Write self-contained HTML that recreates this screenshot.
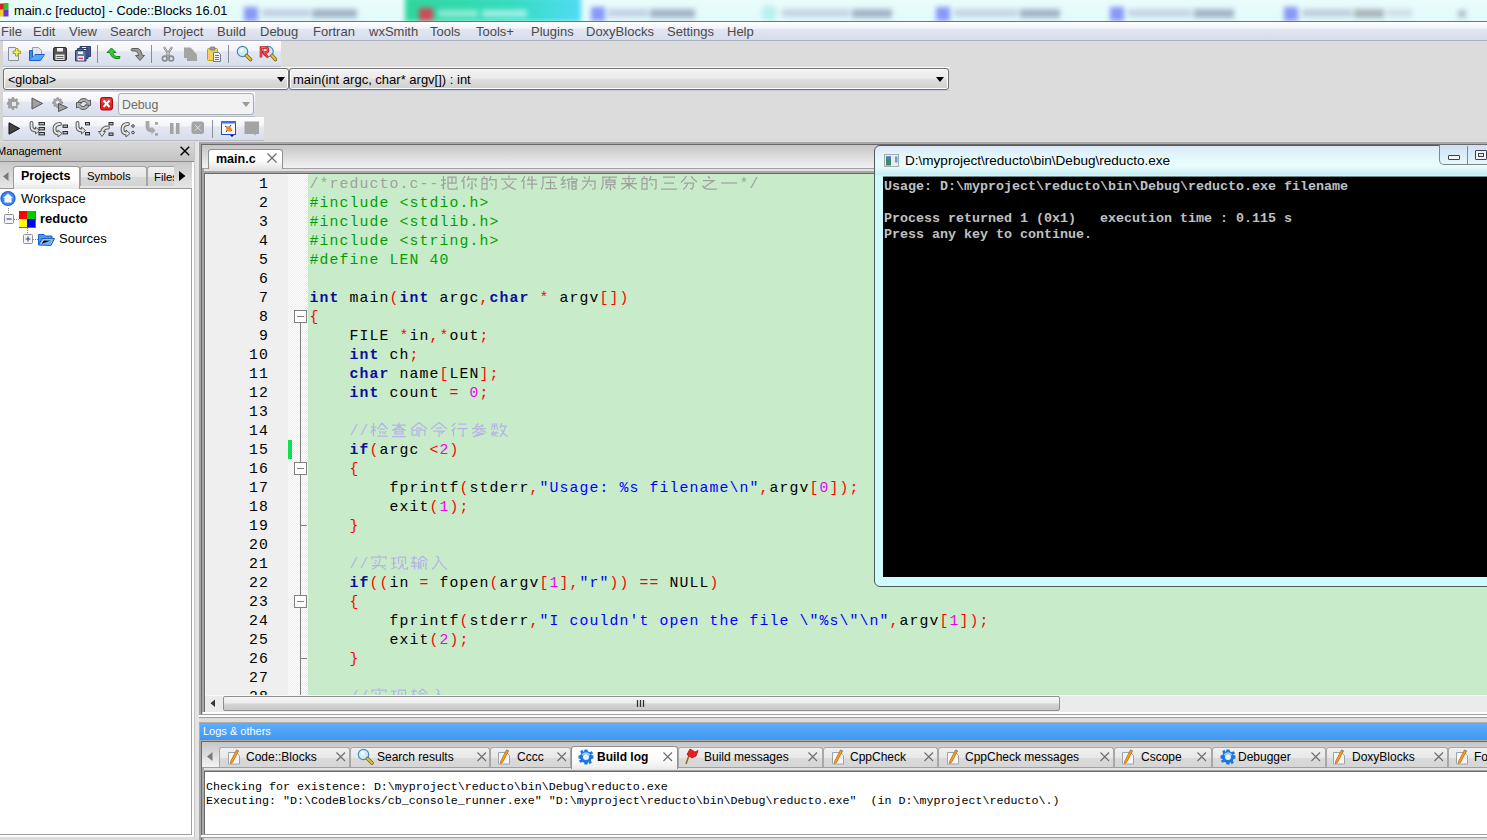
<!DOCTYPE html>
<html><head><meta charset="utf-8">
<style>
*{margin:0;padding:0;box-sizing:border-box}
html,body{width:1487px;height:840px;overflow:hidden;background:#dcdcdc;font-family:"Liberation Sans",sans-serif;font-size:13px;color:#000}
.a{position:absolute}
.t{position:absolute;white-space:nowrap;line-height:1}
#title{left:0;top:0;width:1487px;height:22px;background:linear-gradient(#eafcfc,#e3fafa);border-bottom:1px solid #6b7676;overflow:hidden}
#menu{left:0;top:22px;width:1487px;height:19px;background:linear-gradient(#fefefe 0,#f3f4f9 6px,#e2e6f2 7.5px,#d8ddec 18px);border-bottom:1px solid #aab0c0}
.m{position:absolute;top:24px;font-size:13px;color:#4a4a4a}
.tb{position:absolute;background:linear-gradient(#fdfdfe 0%,#f3f4f9 38%,#e3e7f2 44%,#d9deec 100%);border-bottom:1px solid #b9bcc6}
.strip{position:absolute;left:0;width:3px;background:#d5d5d5}
.sep{position:absolute;width:1px;background:#8a8e99}
.combo{position:absolute;border:1px solid #707070;border-radius:3px;box-shadow:inset 0 0 0 1px #fdfdfd;background:linear-gradient(#f2f2f2 0%,#ebebeb 45%,#dddddd 55%,#cfcfcf 100%)}
.code{font-family:"Liberation Mono",monospace;font-size:16.67px}

.ln{position:absolute;left:205px;width:64px;height:19px;text-align:right;font-family:"Liberation Mono",monospace;font-size:14.8px;letter-spacing:1.12px;line-height:19px;padding-top:1px;color:#000;white-space:pre}
.cl{position:absolute;left:309.5px;height:19px;font-family:"Liberation Mono",monospace;font-size:14.8px;letter-spacing:1.12px;line-height:19px;padding-top:1px;color:#000;white-space:pre}
.cl .k{color:#0c0ca0;font-weight:bold}
.cl .o{color:#ff0000}
.cl .n{color:#f000f0}
.cl .s{color:#0000ff}
.cl .p{color:#00a000}
.cl .c{color:#a0a0a0}
.cl .l{color:#b4b4e6}
.g{vertical-align:top;margin-top:-1.5px;margin-left:-1px;margin-right:1px;fill:none;stroke:currentColor;stroke-width:1.25}
.con{position:absolute;white-space:pre;font-family:"Liberation Mono",monospace;font-size:13.33px;font-weight:bold;line-height:16px;color:#c0c0c0}
.logt{position:absolute;white-space:pre;font-family:"Liberation Mono",monospace;font-size:11.67px;line-height:14px;color:#000}
.fb{position:absolute;left:294px;width:13px;height:13px;border:1px solid #808080;background:#fff}.fb:after{content:"";position:absolute;left:2px;top:5px;width:7px;height:1px;background:#808080}
</style></head><body>

<!-- title bar -->
<div id="title" class="a"></div>
<div class="a" style="left:0;top:0;width:1487px;height:21px;overflow:hidden">
 <div class="a" style="left:-20px;top:-10px;width:1530px;height:40px;filter:blur(2.5px)">
  <div class="a" style="left:264px;top:17px;width:14px;height:14px;background:#7f8cf6;opacity:.9"></div>
  <div class="a" style="left:282px;top:19px;width:48px;height:8px;background:#b4bed8;opacity:.7"></div>
  <div class="a" style="left:332px;top:19px;width:45px;height:9px;background:#98a8c0;opacity:.85"></div>
  <div class="a" style="left:425px;top:6px;width:176px;height:26px;background:linear-gradient(90deg,#2fd69a,#35dcc0 60%,#50dcf4)"></div>
  <div class="a" style="left:439px;top:18px;width:14px;height:13px;background:#d04a56"></div>
  <div class="a" style="left:458px;top:20px;width:40px;height:7px;background:#a8f0e0;opacity:.8"></div>
  <div class="a" style="left:502px;top:20px;width:45px;height:7px;background:#c0f4f0;opacity:.8"></div>
  <div class="a" style="left:611px;top:17px;width:14px;height:14px;background:#7f8cf6;opacity:.9"></div>
  <div class="a" style="left:628px;top:19px;width:40px;height:8px;background:#b4bed8;opacity:.7"></div>
  <div class="a" style="left:670px;top:19px;width:45px;height:9px;background:#98a8c0;opacity:.85"></div>
  <div class="a" style="left:781px;top:15px;width:16px;height:16px;border-radius:8px;background:#b0ecec;opacity:.8"></div>
  <div class="a" style="left:802px;top:19px;width:68px;height:8px;background:#b8c4dc;opacity:.7"></div>
  <div class="a" style="left:872px;top:19px;width:40px;height:9px;background:#98a8c0;opacity:.85"></div>
  <div class="a" style="left:956px;top:17px;width:14px;height:14px;background:#7f8cf6;opacity:.9"></div>
  <div class="a" style="left:974px;top:19px;width:64px;height:8px;background:#b8c4dc;opacity:.7"></div>
  <div class="a" style="left:1040px;top:19px;width:40px;height:9px;background:#98a8c0;opacity:.85"></div>
  <div class="a" style="left:1130px;top:17px;width:14px;height:14px;background:#7f8cf6;opacity:.9"></div>
  <div class="a" style="left:1148px;top:19px;width:64px;height:8px;background:#b8c4dc;opacity:.7"></div>
  <div class="a" style="left:1214px;top:19px;width:40px;height:9px;background:#98a8c0;opacity:.85"></div>
  <div class="a" style="left:1304px;top:17px;width:14px;height:14px;background:#7f8cf6;opacity:.9"></div>
  <div class="a" style="left:1322px;top:19px;width:50px;height:8px;background:#b0bcd0;opacity:.7"></div>
  <div class="a" style="left:1374px;top:19px;width:30px;height:9px;background:#90989f;opacity:.7"></div>
  <div class="a" style="left:1407px;top:19px;width:25px;height:8px;background:#c8d4e0;opacity:.7"></div>
  <div class="a" style="left:1478px;top:20px;width:8px;height:8px;background:#a0a8b8;opacity:.7"></div>
 </div>
</div>
<svg class="a" style="left:0;top:3px" width="9" height="15"><rect x="-1" y="0.5" width="5" height="6" fill="#e02020"/><rect x="3.5" y="0" width="5" height="6.5" fill="#30c030"/><rect x="-1" y="7" width="5" height="6.5" fill="#e8d020"/><rect x="3.5" y="6.5" width="5" height="7" fill="#7030d0"/></svg>
<div class="t" style="left:14px;top:5px;font-size:12.8px;color:#000">main.c [reducto] - Code::Blocks 16.01</div>

<div id="menu" class="a"></div>
<div class="m" style="left:1px">File</div>
<div class="m" style="left:33px">Edit</div>
<div class="m" style="left:69px">View</div>
<div class="m" style="left:110px">Search</div>
<div class="m" style="left:163px">Project</div>
<div class="m" style="left:217px">Build</div>
<div class="m" style="left:260px">Debug</div>
<div class="m" style="left:313px">Fortran</div>
<div class="m" style="left:369px">wxSmith</div>
<div class="m" style="left:430px">Tools</div>
<div class="m" style="left:476px">Tools+</div>
<div class="m" style="left:531px">Plugins</div>
<div class="m" style="left:586px">DoxyBlocks</div>
<div class="m" style="left:667px">Settings</div>
<div class="m" style="left:727px">Help</div>

<!-- toolbar 1 -->
<div class="tb" style="left:0;top:41px;width:281px;height:26px"></div>
<div class="strip" style="top:41px;height:26px"></div>

<!-- combo row -->
<div class="a" style="left:3px;top:67px;width:947px;height:1px;background:#fbfbfb"></div>
<div class="a" style="left:3px;top:90px;width:947px;height:1px;background:#c4c8d8"></div>
<div class="combo" style="left:3px;top:68px;width:286px;height:22px"></div>
<div class="combo" style="left:289px;top:68px;width:660px;height:22px"></div>

<!-- toolbar 2 -->
<div class="tb" style="left:0;top:92px;width:255px;height:25px"></div>
<div class="strip" style="top:92px;height:25px"></div>
<!-- toolbar 3 -->
<div class="tb" style="left:0;top:117px;width:264px;height:24px"></div>
<div class="strip" style="top:117px;height:24px"></div>
<!--ICONS-->
<svg class="a" style="left:7px;top:46px" width="16" height="16" viewBox="0 0 16 16"><path d="M1.5 1.5H8.5L11.5 4.5V14.5H1.5Z" fill="#e4ebf2" stroke="#8a9099"/><path d="M8.5 2.5H11V5H13.5V7.5H11V10H8.5V7.5H6V5H8.5Z" fill="#f0ee60" stroke="#a8a020" stroke-width="1"/></svg>
<svg class="a" style="left:28px;top:46px" width="18" height="16" viewBox="0 0 18 16"><path d="M4.5 1.5H10.5L13.5 4.5V11H4.5Z" fill="#e2e6ea" stroke="#9aa0a8"/><path d="M1.5 4.5H4.5V13.5L7 8.5H16.5L12.5 14.5H1.5Z" fill="#3b8ee6" stroke="#1d5fc4"/><path d="M2 14L6.5 9H16L12 14Z" fill="#55a8f2"/></svg>
<svg class="a" style="left:52px;top:46px" width="16" height="16" viewBox="0 0 16 16"><rect x="1.5" y="1.5" width="13" height="13" rx="1.5" fill="#555" stroke="#2e2e2e"/><rect x="5" y="2" width="6" height="3.5" fill="#f2f2f2"/><rect x="3.5" y="8.5" width="9" height="5.5" fill="#e6e6e6"/><path d="M4.5 10.5H11.5M4.5 12.5H11.5" stroke="#666" stroke-width="1"/></svg>
<svg class="a" style="left:74px;top:45px" width="18" height="17" viewBox="0 0 18 17"><path d="M6 1.5H16.5V11.5H6Z" fill="#4b6190" stroke="#2d3e66"/><path d="M3.5 3.5H14V13.5H3.5Z" fill="#50679a" stroke="#2d3e66"/><path d="M1.5 5.5H12V16H1.5Z" fill="#6179ab" stroke="#2d3e66"/><rect x="4" y="6.5" width="5" height="2.5" fill="#f4f4f4"/><rect x="3.5" y="11" width="6.5" height="4.5" fill="#e8e8ee"/><path d="M4.5 13.3H9" stroke="#e03030" stroke-width="1.2"/><path d="M8 2.5H12M10 4.5H12" stroke="#e8ecf4" stroke-width="1"/></svg>
<div class="sep" style="left:97px;top:45px;height:18px"></div>
<svg class="a" style="left:106px;top:47px" width="16" height="14" viewBox="0 0 16 14"><path d="M5.5 1L1 5.5H3.5L4.5 7.5Q6.5 11.5 10 11.5H13.5L14 9.5H10.5Q8 9.5 7 6.5L7.5 5.5H10Z" fill="#3cc43c" stroke="#118a11" stroke-width="1" stroke-linejoin="round"/></svg>
<svg class="a" style="left:130px;top:47px" width="16" height="15" viewBox="0 0 16 15"><path d="M1 2.5Q1 1.5 3 1.5H7Q10.5 1.5 11.5 6L12.5 8.5H14.5L10 13.5L5.5 8.5H8.5L8 6.5Q7 4 5 4H2Z" fill="#9a9a9a" stroke="#5e5e5e" stroke-width="1" stroke-linejoin="round"/></svg>
<div class="sep" style="left:151px;top:45px;height:18px"></div>
<svg class="a" style="left:161px;top:46px" width="14" height="16" viewBox="0 0 14 16"><path d="M3 1L8.5 10M11 1L5.5 10" stroke="#7c7c7c" stroke-width="2.2"/><path d="M3 1L8.5 10M11 1L5.5 10" stroke="#dcdcdc" stroke-width="0.8"/><circle cx="3.8" cy="12.5" r="2.4" fill="none" stroke="#8a8a8a" stroke-width="1.6"/><circle cx="10.2" cy="12.5" r="2.4" fill="none" stroke="#8a8a8a" stroke-width="1.6"/></svg>
<svg class="a" style="left:183px;top:46px" width="16" height="16" viewBox="0 0 16 16"><path d="M1 1.5H7.5L10.5 4.5V12H1Z" fill="#a4a4a4"/><path d="M4 5H10.5L14 8.5V15H4Z" fill="#a4a4a4"/></svg>
<svg class="a" style="left:206px;top:46px" width="16" height="16" viewBox="0 0 16 16"><rect x="1.5" y="2.5" width="10" height="12" rx="1" fill="#f6cf5c" stroke="#c69a20"/><rect x="4" y="1" width="5" height="3" rx="1" fill="#9aa2aa" stroke="#6a727a" stroke-width="0.8"/><path d="M7.5 6.5H12.5L14.5 8.5V15.5H7.5Z" fill="#f2f4f8" stroke="#6a7a8a"/><path d="M9 9.5H13M9 11.5H13M9 13.5H13" stroke="#3a78d8" stroke-width="1"/></svg>
<div class="sep" style="left:228px;top:45px;height:18px"></div>
<svg class="a" style="left:236px;top:45px" width="17" height="17" viewBox="0 0 17 17"><circle cx="6.5" cy="6.5" r="5.2" fill="#cfeaf6" stroke="#4a8cae" stroke-width="1.2"/><circle cx="5.5" cy="5" r="2" fill="#f2fbff"/><path d="M10.5 10.5L14.5 14.5" stroke="#7a6210" stroke-width="3.6" stroke-linecap="round"/><path d="M10.5 10.5L14.5 14.5" stroke="#e0c040" stroke-width="2" stroke-linecap="round"/></svg>
<svg class="a" style="left:259px;top:45px" width="18" height="17" viewBox="0 0 18 17"><circle cx="9" cy="6.5" r="5.2" fill="#cfeaf6" stroke="#4a8cae" stroke-width="1.2"/><path d="M13 10.5L16.5 14.5" stroke="#7a6210" stroke-width="3.6" stroke-linecap="round"/><path d="M13 10.5L16.5 14.5" stroke="#e0c040" stroke-width="2" stroke-linecap="round"/><path d="M2 12.5V2.5H6.5Q9 2.5 9 5Q9 7.5 6.5 7.5H4.5L9 12.5" fill="none" stroke="#c81818" stroke-width="2.6"/><path d="M2 12.5V2.5H6.5Q9 2.5 9 5Q9 7.5 6.5 7.5H4.5L9 12.5" fill="none" stroke="#ff6a6a" stroke-width="0.9"/></svg>
<svg class="a" style="left:7px;top:97px" width="14" height="14" viewBox="0 0 14 14"><g transform="translate(0.5 -0.3) scale(0.68)" fill="#9e9e9e"><path d="M6.5 0.5H9.5L10 2.5L12 3.5L13.8 2.3L15.7 4.2L14.5 6L15.5 8L17.5 8.5V11.5L15.5 12L14.5 14L15.7 15.8L13.8 17.7L12 16.5L10 17.5L9.5 19.5H6.5L6 17.5L4 16.5L2.2 17.7L0.3 15.8L1.5 14L0.5 12L-1.5 11.5V8.5L0.5 8L1.5 6L0.3 4.2L2.2 2.3L4 3.5L6 2.5Z"/></g><rect x="5" y="5" width="4" height="4" fill="#e4e7ef"/></svg>
<svg class="a" style="left:31px;top:97px" width="12" height="13" viewBox="0 0 12 13"><path d="M1 1V12L11.5 6.5Z" fill="#a0a0a0" stroke="#555" stroke-width="1"/></svg>
<svg class="a" style="left:52px;top:97px" width="16" height="15" viewBox="0 0 16 15"><g transform="translate(1.5 0.5) scale(0.52)" fill="#a8a8a8" stroke="#707070" stroke-width="1"><path d="M6.5 0.5H9.5L10 2.5L12 3.5L13.8 2.3L15.7 4.2L14.5 6L15.5 8L17.5 8.5V11.5L15.5 12L14.5 14L15.7 15.8L13.8 17.7L12 16.5L10 17.5L9.5 19.5H6.5L6 17.5L4 16.5L2.2 17.7L0.3 15.8L1.5 14L0.5 12L-1.5 11.5V8.5L0.5 8L1.5 6L0.3 4.2L2.2 2.3L4 3.5L6 2.5Z"/></g><circle cx="5.6" cy="5.3" r="1.6" fill="#f0f0f0"/><path d="M6.5 6.5V14.5L15.5 10.5Z" fill="#a0a0a0" stroke="#555" stroke-width="1"/></svg>
<svg class="a" style="left:75px;top:97px" width="17" height="14" viewBox="0 0 17 14"><path d="M3 6Q4 1.5 9 1.5Q12 1.5 13.5 4L15.5 3V8.5H10L12 6.5Q11 4.5 9 4.5Q6.5 4.5 6 6Z" fill="#b0b0b0" stroke="#5a5a5a" stroke-width="1" stroke-linejoin="round"/><path d="M14 8Q13 12.5 8 12.5Q5 12.5 3.5 10L1.5 11V5.5H7L5 7.5Q6 9.5 8 9.5Q10.5 9.5 11 8Z" fill="#b0b0b0" stroke="#5a5a5a" stroke-width="1" stroke-linejoin="round"/></svg>
<svg class="a" style="left:100px;top:97px" width="13" height="14" viewBox="0 0 13 14"><rect x="0.5" y="0.5" width="12" height="12.5" rx="2" fill="#e02020" stroke="#a01010"/><rect x="1.5" y="1.5" width="10" height="5" rx="1" fill="#f05050" opacity="0.6"/><path d="M3.5 3.5L9.5 10M9.5 3.5L3.5 10" stroke="#fff" stroke-width="2"/></svg>
<svg class="a" style="left:8px;top:122px" width="12" height="13" viewBox="0 0 12 13"><path d="M1 0.8V12.2L11.5 6.5Z" fill="#444" stroke="#111" stroke-width="1"/></svg>
<svg class="a" style="left:29px;top:121px" width="17" height="16" viewBox="0 0 17 16"><path d="M2.5 2V5.5Q2.5 9.5 7 9.5" fill="none" stroke="#5a5a5a" stroke-width="3.8" stroke-linecap="round" stroke-linejoin="round"/><path d="M6.5 6L10.5 9.5L6.5 13Z" fill="#e6e6e6" stroke="#5a5a5a" stroke-width="1" stroke-linejoin="round"/><path d="M2.5 2V5.5Q2.5 9.5 7 9.5" fill="none" stroke="#e6e6e6" stroke-width="1.8" stroke-linecap="round" stroke-linejoin="round"/><rect x="10" y="1.5" width="5.5" height="2.4" fill="#b8b8b8" stroke="#2e2e2e" stroke-width="1"/><rect x="10" y="6.5" width="5.5" height="2.4" fill="#b8b8b8" stroke="#2e2e2e" stroke-width="1"/><rect x="10" y="11.5" width="5.5" height="2.4" fill="#b8b8b8" stroke="#2e2e2e" stroke-width="1"/></svg>
<svg class="a" style="left:52px;top:121px" width="17" height="17" viewBox="0 0 17 17"><path d="M8 3Q2.5 3 2.5 8Q2.5 12.5 6.5 12.5" fill="none" stroke="#5a5a5a" stroke-width="3.8" stroke-linecap="round" stroke-linejoin="round"/><path d="M6 9L10 12.5L6 16Z" fill="#e6e6e6" stroke="#5a5a5a" stroke-width="1" stroke-linejoin="round"/><path d="M8 3Q2.5 3 2.5 8Q2.5 12.5 6.5 12.5" fill="none" stroke="#e6e6e6" stroke-width="1.8" stroke-linecap="round" stroke-linejoin="round"/><rect x="11" y="4" width="4.5" height="2.4" fill="#b8b8b8" stroke="#2e2e2e" stroke-width="1"/><rect x="11" y="10.5" width="4.5" height="2.4" fill="#b8b8b8" stroke="#2e2e2e" stroke-width="1"/></svg>
<svg class="a" style="left:75px;top:121px" width="16" height="16" viewBox="0 0 16 16"><path d="M2.5 2V5.5Q2.5 9.5 7 9.5" fill="none" stroke="#5a5a5a" stroke-width="3.8" stroke-linecap="round" stroke-linejoin="round"/><path d="M6.5 6L10.5 9.5L6.5 13Z" fill="#e6e6e6" stroke="#5a5a5a" stroke-width="1" stroke-linejoin="round"/><path d="M2.5 2V5.5Q2.5 9.5 7 9.5" fill="none" stroke="#e6e6e6" stroke-width="1.8" stroke-linecap="round" stroke-linejoin="round"/><rect x="10.5" y="1.5" width="4" height="2.4" fill="#b8b8b8" stroke="#2e2e2e" stroke-width="1"/><rect x="10.5" y="11.5" width="4" height="2.4" fill="#b8b8b8" stroke="#2e2e2e" stroke-width="1"/></svg>
<svg class="a" style="left:98px;top:121px" width="17" height="18" viewBox="0 0 17 18"><path d="M10 6.5Q5 6.5 4 11" fill="none" stroke="#5a5a5a" stroke-width="3.8" stroke-linecap="round" stroke-linejoin="round"/><path d="M0.5 10.5L4 15.5L7.5 10.5Z" fill="#e6e6e6" stroke="#5a5a5a" stroke-width="1" stroke-linejoin="round"/><path d="M10 6.5Q5 6.5 4 11" fill="none" stroke="#e6e6e6" stroke-width="1.8" stroke-linecap="round" stroke-linejoin="round"/><rect x="11" y="1.5" width="4" height="2.4" fill="#b8b8b8" stroke="#2e2e2e" stroke-width="1"/><rect x="11" y="12" width="4" height="2.4" fill="#b8b8b8" stroke="#2e2e2e" stroke-width="1"/></svg>
<svg class="a" style="left:120px;top:121px" width="17" height="17" viewBox="0 0 17 17"><path d="M8 3Q2.5 3 2.5 8Q2.5 12.5 6.5 12.5" fill="none" stroke="#5a5a5a" stroke-width="3.8" stroke-linecap="round" stroke-linejoin="round"/><path d="M6 9L10 12.5L6 16Z" fill="#e6e6e6" stroke="#5a5a5a" stroke-width="1" stroke-linejoin="round"/><path d="M8 3Q2.5 3 2.5 8Q2.5 12.5 6.5 12.5" fill="none" stroke="#e6e6e6" stroke-width="1.8" stroke-linecap="round" stroke-linejoin="round"/><circle cx="13" cy="5" r="1.3" fill="#ddd" stroke="#333" stroke-width="0.9"/><circle cx="13" cy="11.5" r="1.3" fill="#ddd" stroke="#333" stroke-width="0.9"/></svg>
<svg class="a" style="left:145px;top:121px" width="14" height="16" viewBox="0 0 14 16"><path d="M2.5 1V5.5Q2.5 9.5 7 9.5" fill="none" stroke="#a8a8a8" stroke-width="3.8" stroke-linecap="round"/><path d="M6.5 5.5L10.5 9.5L6.5 13.5Z" fill="#a8a8a8"/><rect x="10" y="1" width="3" height="2.8" fill="#a8a8a8"/><rect x="10" y="12" width="3" height="2.8" fill="#a8a8a8"/></svg>
<svg class="a" style="left:169px;top:122px" width="12" height="14" viewBox="0 0 12 14"><rect x="1" y="1" width="3.5" height="11" fill="#a4a4a4"/><rect x="7" y="1" width="3.5" height="11" fill="#a4a4a4"/></svg>
<svg class="a" style="left:191px;top:121px" width="14" height="14" viewBox="0 0 14 14"><rect x="0.5" y="0.5" width="12.5" height="12.5" rx="2.5" fill="#a4a4a4"/><path d="M3.8 3.8L9.7 9.7M9.7 3.8L3.8 9.7" stroke="#e0e0e0" stroke-width="1"/></svg>
<div class="sep" style="left:212px;top:120px;height:18px"></div>
<svg class="a" style="left:220px;top:120px" width="18" height="18" viewBox="0 0 18 18"><rect x="1.5" y="1.5" width="14" height="13" fill="#f6f8fc" stroke="#1e4bd8" stroke-width="1"/><rect x="1" y="1" width="15" height="2.5" fill="#3a6ef0"/><path d="M5 6L12 11M6 12L11 5" stroke="#222" stroke-width="0.9"/><ellipse cx="9" cy="9" rx="3" ry="2.2" transform="rotate(35 9 9)" fill="#f08a20"/><path d="M10 15H14L12 17Z" fill="#111"/></svg>
<svg class="a" style="left:243px;top:120px" width="18" height="18" viewBox="0 0 18 18"><path d="M1.5 1.5H16V14H13L12 15.5L11 14H1.5Z" fill="#a4a4a4"/></svg>
<!--/ICONS-->

<!-- combo texts -->
<div class="t" style="left:8px;top:74px;font-size:12.5px;color:#000">&lt;global&gt;</div>
<svg class="a" style="left:277px;top:77px" width="8" height="5"><path d="M0 0H8L4 5Z" fill="#000"/></svg>
<div class="t" style="left:293px;top:73px;font-size:13px;color:#000">main(int argc, char* argv[]) : int</div>
<svg class="a" style="left:936px;top:77px" width="8" height="5"><path d="M0 0H8L4 5Z" fill="#000"/></svg>
<!-- debug combo -->
<div class="a" style="left:118px;top:93px;width:136px;height:22px;border:1px solid #a8acb4;border-radius:3px;background:#f2f2f2"></div>
<div class="t" style="left:122px;top:99px;font-size:12.3px;color:#6d6d6d">Debug</div>
<svg class="a" style="left:242px;top:102px" width="8" height="5"><path d="M0 0H8L4 5Z" fill="#9a9a9a"/></svg>


<!-- ===== left panel ===== -->
<div class="a" style="left:0;top:142px;width:194px;height:20px;background:linear-gradient(#d8d8d8,#c4c4c4);border-bottom:1px solid #8c8c8c"></div>
<div class="t" style="left:-3px;top:146px;font-size:11px;color:#000">Management</div>
<svg class="a" style="left:180px;top:146px" width="10" height="10"><path d="M0.6 0.8L9.2 9.2M9.2 0.8L0.6 9.2" stroke="#000" stroke-width="1.5"/></svg>
<!-- tab row -->
<div class="a" style="left:0;top:162px;width:192px;height:27px;background:linear-gradient(#c8c8c8,#e6e6e6);border-bottom:1px solid #9a9a9a"></div>
<!-- tree -->
<div class="a" style="left:0;top:189px;width:192px;height:646px;background:#fff;border-right:1px solid #a0a0a0;border-bottom:1px solid #a0a0a0"></div>
<div class="a" style="left:0;top:835px;width:194px;height:2px;background:#fff"></div>
<!-- mgmt tabs -->
<svg class="a" style="left:3px;top:172px" width="6" height="9"><path d="M5.5 0V9L0 4.5Z" fill="#7a7a7a"/></svg>
<div class="a" style="left:13px;top:166px;width:67px;height:23px;border:1px solid #9a9a9a;border-bottom:none;border-radius:3px 3px 0 0;background:linear-gradient(#ffffff,#fdfdfd 60%,#e8e8e8)"></div>
<div class="t" style="left:21px;top:170px;font-size:12.5px;font-weight:bold;color:#000">Projects</div>
<div class="a" style="left:80px;top:166px;width:67px;height:20px;border:1px solid #a4a4a4;border-bottom:none;border-radius:3px 3px 0 0;background:linear-gradient(#f0f0f0,#e6e6e6 50%,#d8d8d8 52%,#d4d4d4)"></div>
<div class="t" style="left:87px;top:171px;font-size:11.4px;color:#000">Symbols</div>
<div class="a" style="left:147px;top:166px;width:27px;height:20px;border:1px solid #a4a4a4;border-bottom:none;border-right:none;border-radius:3px 0 0 0;background:linear-gradient(#f0f0f0,#e6e6e6 50%,#d8d8d8 52%,#d4d4d4);overflow:hidden"><div class="t" style="left:6px;top:5px;font-size:11.4px;color:#000">Files</div></div>
<svg class="a" style="left:179px;top:171px" width="7" height="10"><path d="M0 0V10L6.5 5Z" fill="#000"/></svg>
<!-- tree -->
<svg class="a" style="left:0;top:190px" width="17" height="17"><circle cx="8" cy="8.5" r="7.6" fill="#1a5ed8"/><circle cx="8" cy="8.5" r="6.4" fill="#3f8af2"/><path d="M8 3.5L3 8H4.5V12.5H11.5V8H13Z" fill="#fff"/></svg>
<div class="t" style="left:21px;top:192px;font-size:13px;color:#000">Workspace</div>
<svg class="a" style="left:8px;top:208px" width="1" height="6"><path d="M0.5 0V6" stroke="#888" stroke-dasharray="1 1"/></svg>
<svg class="a" style="left:4px;top:214px" width="11" height="11"><rect x="0.5" y="0.5" width="9" height="9" rx="1" fill="#f4f4f4" stroke="#909090"/><path d="M2.5 5H7.5" stroke="#3050a0" stroke-width="1.2"/></svg>
<svg class="a" style="left:14px;top:219px" width="5" height="1"><path d="M0 0.5H5" stroke="#888" stroke-dasharray="1 1"/></svg>
<svg class="a" style="left:19px;top:211px" width="17" height="17"><rect x="0" y="0" width="8" height="8" fill="#f00"/><rect x="8" y="0" width="8" height="8" fill="#0c0"/><rect x="0" y="8" width="8" height="8" fill="#ff0"/><rect x="8" y="8" width="8" height="8" fill="#00f"/><path d="M0 16.5H16M16.5 0V17" stroke="#666"/></svg>
<div class="t" style="left:40px;top:212px;font-size:13px;font-weight:bold;color:#000">reducto</div>
<svg class="a" style="left:27px;top:228px" width="1" height="7"><path d="M0.5 0V7" stroke="#888" stroke-dasharray="1 1"/></svg>
<svg class="a" style="left:23px;top:234px" width="11" height="11"><rect x="0.5" y="0.5" width="9" height="9" rx="1" fill="#f4f4f4" stroke="#909090"/><path d="M2.5 5H7.5M5 2.5V7.5" stroke="#3050a0" stroke-width="1.2"/></svg>
<svg class="a" style="left:33px;top:239px" width="5" height="1"><path d="M0 0.5H5" stroke="#888" stroke-dasharray="1 1"/></svg>
<svg class="a" style="left:38px;top:233px" width="18" height="13"><path d="M0.5 1.5H6L7.5 3H14V6H4L0.5 12Z" fill="#4a9af0" stroke="#1e5ec8"/><path d="M0.5 12L4 5.5H16.5L13 12.5Z" fill="#6cb4f8" stroke="#1e5ec8"/><path d="M3 11L5.5 7H14" stroke="#c8e4ff" stroke-width="1"/></svg>
<div class="t" style="left:59px;top:232px;font-size:13px;color:#000">Sources</div>

<div class="a" style="left:192px;top:162px;width:2px;height:675px;background:#fff"></div>

<div class="a" style="left:195px;top:142px;width:4px;height:696px;background:#e4e4e4"></div>
<div class="a" style="left:194px;top:142px;width:1px;height:696px;background:#c4c4c4"></div>
<!-- ===== editor notebook ===== -->
<div class="a" style="left:199px;top:142px;width:1288px;height:2px;background:#a9a9a9"></div>
<div class="a" style="left:199px;top:142px;width:2px;height:576px;background:#a6a6a6"></div>
<div class="a" style="left:201px;top:144px;width:1286px;height:1px;background:#6a6a6a"></div>
<div class="a" style="left:201px;top:144px;width:1px;height:570px;background:#6a6a6a"></div>
<div class="a" style="left:202px;top:145px;width:1285px;height:23px;background:linear-gradient(#c6c6c6,#eeeeee 21px,#f2f2f2)"></div>
<div class="a" style="left:202px;top:168px;width:1285px;height:1px;background:#a0a0a0"></div>
<div class="a" style="left:202px;top:169px;width:1285px;height:2px;background:#e2e2e2"></div>
<div class="a" style="left:202px;top:171px;width:1285px;height:2px;background:#a6a6a6"></div>
<div class="a" style="left:202px;top:169px;width:2px;height:543px;background:#a8a8a8"></div>
<div class="a" style="left:204px;top:173px;width:1283px;height:1px;background:#6a6a6a"></div>
<div class="a" style="left:204px;top:173px;width:1px;height:539px;background:#6a6a6a"></div>
<div class="a" style="left:208px;top:149px;width:75px;height:20px;border:1px solid #8f8f8f;border-bottom:none;border-radius:3px 3px 0 0;background:linear-gradient(#ffffff,#fcfcfc 55%,#e4e4e4)"></div>
<div class="t" style="left:216px;top:153px;font-size:12.5px;font-weight:bold;color:#000">main.c</div>
<svg class="a" style="left:267px;top:153px" width="10" height="10"><path d="M0.5 0.5L9.5 9.5M9.5 0.5L0.5 9.5" stroke="#6a6a6a" stroke-width="1.2"/></svg>
<!-- margins -->
<div class="a" style="left:205px;top:174px;width:83px;height:521px;background:#efefef;border-left:1px solid #f8f8f8"></div>
<div class="a" style="left:288px;top:174px;width:20px;height:521px;background:repeating-conic-gradient(#ececec 0 25%,#ffffff 0 50%) 0 0/2px 2px"></div>
<div class="a" style="left:308px;top:174px;width:1179px;height:521px;background:#c8ecca"></div>

<!-- fold markers -->
<div class="a" style="left:300px;top:322px;width:1px;height:373px;background:#808080"></div>
<div class="fb" style="top:310px"></div>
<div class="fb" style="top:462px"></div>
<div class="fb" style="top:595px"></div>
<div class="a" style="left:300px;top:525px;width:7px;height:1px;background:#808080"></div>
<div class="a" style="left:300px;top:658px;width:7px;height:1px;background:#808080"></div>
<div class="a" style="left:288px;top:440px;width:4px;height:19px;background:#10e050"></div>
<!--CODE-->
<div class="ln" style="top:174px">1</div>
<div class="cl" style="top:174px"><span class="c">/*reducto.c--</span><span class="c"><svg class="g" width="20" height="19" viewBox="0 0 20 19"><path d="M2 6H7 M4.5 2V14.5L3.5 13.5 M2 11.5L7 9 M9 3H17V9H9Z M13 3V9 M9 9V14Q9 15 11 15H18V12.5"/></svg><svg class="g" width="20" height="19" viewBox="0 0 20 19"><path d="M6 2L2.5 8 M4.8 6V15 M10 2L8 6.5 M8.5 5H17.5L16 7.5 M13 7V15L11.5 14 M10.5 9.5L8.5 13 M15.5 9.5L17.5 13"/></svg><svg class="g" width="20" height="19" viewBox="0 0 20 19"><path d="M5.5 2L4.5 4 M3 4.5H8V15H3Z M3 9.5H8 M12 2L10 7 M11 5.5H17V14Q17 15 15 15 M12 9L13.5 11.5"/></svg><svg class="g" width="20" height="19" viewBox="0 0 20 19"><path d="M10 1.5V4 M2 5H18 M5.5 7Q8 13 17 15.5 M14.5 7Q11 13 3 15.5"/></svg><svg class="g" width="20" height="19" viewBox="0 0 20 19"><path d="M6 2L2.5 8 M4.8 6V15 M10.5 2.5L8.5 7 M9 6H17.5 M8 10H18.5 M13 2V15.5"/></svg><svg class="g" width="20" height="19" viewBox="0 0 20 19"><path d="M3 3H18 M4 3V10Q4 13 2 15.5 M7 8.5H16 M11.5 5V14 M6 14.5H18 M14.5 10.5L16 12.5"/></svg><svg class="g" width="20" height="19" viewBox="0 0 20 19"><path d="M5 2L2.5 6H6L2.5 10.5L7 9.5 M2.5 14L7 12.5 M8.5 5H18 M8.5 5V7 M18 5V7 M13 2V5 M10.5 6.5L9 10 M9.8 8.5V15.5 M12 7.5H18 M13 9H17V15H13Z M13 12H17"/></svg><svg class="g" width="20" height="19" viewBox="0 0 20 19"><path d="M5 2.5L6.5 5 M3 7H16V14Q16 15.5 13 15 M10.5 2Q10 10 3 15.5 M11 10L12.5 12"/></svg><svg class="g" width="20" height="19" viewBox="0 0 20 19"><path d="M3 3H18 M4 3V10Q4 13 2 15.5 M11 3.5L10 5.5 M7 6H16V10.5H7Z M7 8.2H16 M11.5 10.5V15.5L10.5 14.5 M9 12L7 14.5 M14 12L16.5 14.5"/></svg><svg class="g" width="20" height="19" viewBox="0 0 20 19"><path d="M3 4.5H17 M10 1.5V15.5 M6 6L7 8.5 M14.5 6L13 8.5 M2 9.5H18 M9.5 10Q7 13 2.5 15.5 M10.5 10Q13 13 17.5 15.5"/></svg><svg class="g" width="20" height="19" viewBox="0 0 20 19"><path d="M5.5 2L4.5 4 M3 4.5H8V15H3Z M3 9.5H8 M12 2L10 7 M11 5.5H17V14Q17 15 15 15 M12 9L13.5 11.5"/></svg><svg class="g" width="20" height="19" viewBox="0 0 20 19"><path d="M4 3H16 M5 9H15 M2 15H18"/></svg><svg class="g" width="20" height="19" viewBox="0 0 20 19"><path d="M7.5 2Q5 6 2 8.5 M12 2Q15 6 18 8 M5 9H14.5Q14.5 13 13 15.2L11 14.2 M8.5 9Q8 13 4 15.5"/></svg><svg class="g" width="20" height="19" viewBox="0 0 20 19"><path d="M9 2L11 4.5 M4 6.5H15L5 13.5 M3.5 11.5Q5 15 9 15H18"/></svg><svg class="g" width="20" height="19" viewBox="0 0 20 19"><path d="M2 9H18"/></svg></span><span class="c">*/</span></div>
<div class="ln" style="top:193px">2</div>
<div class="cl" style="top:193px"><span class="p">#include &lt;stdio.h&gt;</span></div>
<div class="ln" style="top:212px">3</div>
<div class="cl" style="top:212px"><span class="p">#include &lt;stdlib.h&gt;</span></div>
<div class="ln" style="top:231px">4</div>
<div class="cl" style="top:231px"><span class="p">#include &lt;string.h&gt;</span></div>
<div class="ln" style="top:250px">5</div>
<div class="cl" style="top:250px"><span class="p">#define LEN 40</span></div>
<div class="ln" style="top:269px">6</div>
<div class="cl" style="top:269px"></div>
<div class="ln" style="top:288px">7</div>
<div class="cl" style="top:288px"><span class="k">int</span><span class="i"> main</span><span class="o">(</span><span class="k">int</span><span class="i"> argc</span><span class="o">,</span><span class="k">char</span><span class="i"> </span><span class="o">*</span><span class="i"> argv</span><span class="o">[])</span></div>
<div class="ln" style="top:307px">8</div>
<div class="cl" style="top:307px"><span class="o">{</span></div>
<div class="ln" style="top:326px">9</div>
<div class="cl" style="top:326px"><span class="i">    FILE </span><span class="o">*</span><span class="i">in</span><span class="o">,*</span><span class="i">out</span><span class="o">;</span></div>
<div class="ln" style="top:345px">10</div>
<div class="cl" style="top:345px"><span class="i">    </span><span class="k">int</span><span class="i"> ch</span><span class="o">;</span></div>
<div class="ln" style="top:364px">11</div>
<div class="cl" style="top:364px"><span class="i">    </span><span class="k">char</span><span class="i"> name</span><span class="o">[</span><span class="i">LEN</span><span class="o">];</span></div>
<div class="ln" style="top:383px">12</div>
<div class="cl" style="top:383px"><span class="i">    </span><span class="k">int</span><span class="i"> count </span><span class="o">=</span><span class="i"> </span><span class="n">0</span><span class="o">;</span></div>
<div class="ln" style="top:402px">13</div>
<div class="cl" style="top:402px"></div>
<div class="ln" style="top:421px">14</div>
<div class="cl" style="top:421px"><span class="i">    </span><span class="l">//</span><span class="l"><svg class="g" width="20" height="19" viewBox="0 0 20 19"><path d="M2 6H7.5 M4.5 2V15.5 M4.3 7.5L2 12 M5 8.5L7 10 M13 2L8.5 8 M13 2L18.5 8 M10.5 8H16 M10.5 10L11.5 13 M13.5 10L14 13 M17 10L15.5 13 M8.5 15H18.5"/></svg><svg class="g" width="20" height="19" viewBox="0 0 20 19"><path d="M3 4H17 M10 1.5V8 M9.5 5Q7 8 3 9.5 M10.5 5Q13 8 17 9.5 M6 8.5H14V13H6Z M6 10.8H14 M3 15.5H17"/></svg><svg class="g" width="20" height="19" viewBox="0 0 20 19"><path d="M10 1.5L2 8 M10 1.5L18 8 M7 7H13 M3 9H8V14H3Z M10 9H16V13.5L15 14.5 M10 9V16"/></svg><svg class="g" width="20" height="19" viewBox="0 0 20 19"><path d="M10 1.5L2 8 M10 1.5L18 8 M7 7H13 M4.5 10H15L11.5 13 M10 11V16"/></svg><svg class="g" width="20" height="19" viewBox="0 0 20 19"><path d="M6.5 2L2.5 5.5 M6.5 6.5L2.5 10 M4.5 8.5V15.5 M9 3H17.5 M8 7.5H18.5 M14 7.5V15L12.5 14"/></svg><svg class="g" width="20" height="19" viewBox="0 0 20 19"><path d="M9.5 2L6.5 6L14.5 5.2 M12.5 3.5L14.5 5.5 M3 7.5H17 M10 7.5Q7 11 3 12.5 M11 7.5Q13 10 17.5 11.5 M12.5 10.5L7.5 12.2 M14 12L6.5 14 M16 12.5L4 15.8"/></svg><svg class="g" width="20" height="19" viewBox="0 0 20 19"><path d="M2 5H9 M5.5 2V9 M3 2.5L3.8 3.8 M8 2.5L7.2 3.8 M3.5 6.5L2 8.5 M7.5 6.5L9 8.5 M4.5 10Q3.5 13 3 13.5L9 15.5 M2 12H9.5 M7.5 10.5Q6 14 2.5 15.5 M13 2L11 7 M12 5H18 M16.5 5Q15 12 11 15.5 M12 8.5Q14 13 18.5 15.5"/></svg></span></div>
<div class="ln" style="top:440px">15</div>
<div class="cl" style="top:440px"><span class="i">    </span><span class="k">if</span><span class="o">(</span><span class="i">argc </span><span class="o">&lt;</span><span class="n">2</span><span class="o">)</span></div>
<div class="ln" style="top:459px">16</div>
<div class="cl" style="top:459px"><span class="i">    </span><span class="o">{</span></div>
<div class="ln" style="top:478px">17</div>
<div class="cl" style="top:478px"><span class="i">        fprintf</span><span class="o">(</span><span class="i">stderr</span><span class="o">,</span><span class="s">"Usage: %s filename\n"</span><span class="o">,</span><span class="i">argv</span><span class="o">[</span><span class="n">0</span><span class="o">])</span><span class="o">;</span></div>
<div class="ln" style="top:497px">18</div>
<div class="cl" style="top:497px"><span class="i">        exit</span><span class="o">(</span><span class="n">1</span><span class="o">);</span></div>
<div class="ln" style="top:516px">19</div>
<div class="cl" style="top:516px"><span class="i">    </span><span class="o">}</span></div>
<div class="ln" style="top:535px">20</div>
<div class="cl" style="top:535px"></div>
<div class="ln" style="top:554px">21</div>
<div class="cl" style="top:554px"><span class="i">    </span><span class="l">//</span><span class="l"><svg class="g" width="20" height="19" viewBox="0 0 20 19"><path d="M10 1V3 M3 5.5V3.2H17V5.5 M6 6L8 7.2 M5 8.5L7 9.5 M3 11.5H17 M11 4.5Q11 12 3 15.5 M12.5 12.5L17 15.5"/></svg><svg class="g" width="20" height="19" viewBox="0 0 20 19"><path d="M2 4H7.5 M2.5 9H7 M4.7 4V14 M2 15L8 13 M9.5 3H16.5V10 M9.5 3V10 M13 5.5V10Q12 13.5 9 15.5 M14 10V13.8Q14 15 16 15H18.5V13"/></svg><svg class="g" width="20" height="19" viewBox="0 0 20 19"><path d="M2 4H8 M5.5 2Q4.5 7 3 9H8.5 M5.5 7V15.5 M2 12H8.5 M13.5 2L9 6.5 M13.5 2L18.5 6.5 M11.5 6.5H16 M9.5 8H12V15.5 M9.5 8V15.5 M9.5 10.8H12 M9.5 13H12 M14.5 8.5V13 M17 7.5V15L16 14.5"/></svg><svg class="g" width="20" height="19" viewBox="0 0 20 19"><path d="M7.5 2L10 4 M10 4Q8 12 3 15.5 M10 6.5Q13 12 18 15.5"/></svg></span></div>
<div class="ln" style="top:573px">22</div>
<div class="cl" style="top:573px"><span class="i">    </span><span class="k">if</span><span class="o">((</span><span class="i">in </span><span class="o">=</span><span class="i"> fopen</span><span class="o">(</span><span class="i">argv</span><span class="o">[</span><span class="n">1</span><span class="o">],</span><span class="s">"r"</span><span class="o">))</span><span class="i"> </span><span class="o">==</span><span class="i"> NULL</span><span class="o">)</span></div>
<div class="ln" style="top:592px">23</div>
<div class="cl" style="top:592px"><span class="i">    </span><span class="o">{</span></div>
<div class="ln" style="top:611px">24</div>
<div class="cl" style="top:611px"><span class="i">        fprintf</span><span class="o">(</span><span class="i">stderr</span><span class="o">,</span><span class="s">"I couldn't open the file \"%s\"\n"</span><span class="o">,</span><span class="i">argv</span><span class="o">[</span><span class="n">1</span><span class="o">])</span><span class="o">;</span></div>
<div class="ln" style="top:630px">25</div>
<div class="cl" style="top:630px"><span class="i">        exit</span><span class="o">(</span><span class="n">2</span><span class="o">);</span></div>
<div class="ln" style="top:649px">26</div>
<div class="cl" style="top:649px"><span class="i">    </span><span class="o">}</span></div>
<div class="ln" style="top:668px">27</div>
<div class="cl" style="top:668px"></div>
<div class="ln" style="top:687px">28</div>
<div class="cl" style="top:687px"><span class="i">    </span><span class="l">//</span><span class="l"><svg class="g" width="20" height="19" viewBox="0 0 20 19"><path d="M10 1V3 M3 5.5V3.2H17V5.5 M6 6L8 7.2 M5 8.5L7 9.5 M3 11.5H17 M11 4.5Q11 12 3 15.5 M12.5 12.5L17 15.5"/></svg><svg class="g" width="20" height="19" viewBox="0 0 20 19"><path d="M2 4H7.5 M2.5 9H7 M4.7 4V14 M2 15L8 13 M9.5 3H16.5V10 M9.5 3V10 M13 5.5V10Q12 13.5 9 15.5 M14 10V13.8Q14 15 16 15H18.5V13"/></svg><svg class="g" width="20" height="19" viewBox="0 0 20 19"><path d="M2 4H8 M5.5 2Q4.5 7 3 9H8.5 M5.5 7V15.5 M2 12H8.5 M13.5 2L9 6.5 M13.5 2L18.5 6.5 M11.5 6.5H16 M9.5 8H12V15.5 M9.5 8V15.5 M9.5 10.8H12 M9.5 13H12 M14.5 8.5V13 M17 7.5V15L16 14.5"/></svg><svg class="g" width="20" height="19" viewBox="0 0 20 19"><path d="M7.5 2L10 4 M10 4Q8 12 3 15.5 M10 6.5Q13 12 18 15.5"/></svg></span></div>
<!--/CODE-->
<!-- hscroll -->
<div class="a" style="left:205px;top:695px;width:1282px;height:17px;background:#ebebeb;border-top:1px solid #f8f8f8"></div>
<div class="a" style="left:223px;top:696px;width:837px;height:15px;border:1px solid #8f8f8f;border-radius:2px;background:linear-gradient(#f6f6f6,#ececec 45%,#d4d4d4 55%,#c8c8ca)"></div>
<svg class="a" style="left:210px;top:699px" width="6" height="9"><path d="M5 0.5V8L0.5 4.3Z" fill="#333"/></svg>
<svg class="a" style="left:636px;top:699px" width="10" height="9"><path d="M1.5 1V8M4.5 1V8M7.5 1V8" stroke="#333" stroke-width="1.3"/></svg>
<div class="a" style="left:203px;top:712px;width:1284px;height:2px;background:#fdfdfd"></div>
<div class="a" style="left:201px;top:714px;width:1286px;height:1px;background:#a0a0a0"></div>
<div class="a" style="left:199px;top:715px;width:1288px;height:2px;background:#fdfdfd"></div>
<div class="a" style="left:199px;top:717px;width:1288px;height:1px;background:#a0a0a0"></div>

<!-- ===== logs & others ===== -->
<div class="a" style="left:199px;top:722px;width:1288px;height:19px;background:#b4aca4"></div>
<div class="a" style="left:200px;top:723px;width:1287px;height:17px;background:linear-gradient(#5eaefb,#3d98f4)"></div>
<div class="t" style="left:203px;top:726px;font-size:11px;color:#fff">Logs &amp; others</div>
<div class="a" style="left:199px;top:740px;width:2px;height:100px;background:#a6a6a6"></div>
<div class="a" style="left:201px;top:741px;width:1286px;height:1px;background:#6a6a6a"></div>
<div class="a" style="left:201px;top:741px;width:1px;height:99px;background:#6a6a6a"></div>
<div class="a" style="left:202px;top:742px;width:1285px;height:25px;background:linear-gradient(#c6c6c6,#eeeeee 22px,#f2f2f2)"></div>
<div class="a" style="left:202px;top:767px;width:1285px;height:1px;background:#a0a0a0"></div>
<div class="a" style="left:202px;top:768px;width:1285px;height:2px;background:#e2e2e2"></div>
<div class="a" style="left:202px;top:770px;width:1285px;height:1px;background:#a6a6a6"></div>
<div class="a" style="left:202px;top:768px;width:2px;height:72px;background:#a8a8a8"></div>
<div class="a" style="left:204px;top:771px;width:1283px;height:1px;background:#6a6a6a"></div>
<div class="a" style="left:204px;top:771px;width:1px;height:63px;background:#6a6a6a"></div>
<div class="a" style="left:205px;top:772px;width:1282px;height:62px;background:#fff"></div>
<div class="a" style="left:203px;top:834px;width:1284px;height:1px;background:#a0a0a0"></div>
<div class="a" style="left:201px;top:835px;width:1286px;height:2px;background:#fdfdfd"></div>
<div class="a" style="left:199px;top:837px;width:1288px;height:1px;background:#a0a0a0"></div>

<!--LOGS-->
<svg class="a" style="left:207px;top:752px" width="6" height="9"><path d="M5.5 0V9L0 4.5Z" fill="#7a7a7a"/></svg>
<div class="a" style="left:219px;top:747px;width:131px;height:20px;border:1px solid #a8a8a8;border-bottom:none;border-radius:3px 3px 0 0;background:linear-gradient(#f0f0f0,#e8e8e8 50%,#dadada 52%,#d6d6d6)"></div>
<svg class="a" style="left:227px;top:749px" width="14" height="16"><path d="M1.5 3.5H9.5L12.5 6.5V15H1.5Z" fill="#f4f6fa" stroke="#9aa4b0"/><path d="M3.5 12.5L9.5 1L11.5 2L5.5 13.5L3.5 14.5Z" fill="#f6a020" stroke="#c86a00" stroke-width="0.8"/><path d="M9.5 1L11.5 2" stroke="#888" stroke-width="1.2"/></svg>
<div class="t" style="left:246px;top:751px;font-size:12px;color:#000">Code::Blocks</div>
<svg class="a" style="left:336px;top:752px" width="10" height="10"><path d="M0.5 0.5L9 9M9 0.5L0.5 9" stroke="#6e6e6e" stroke-width="1.15"/></svg>
<div class="a" style="left:350px;top:747px;width:140px;height:20px;border:1px solid #a8a8a8;border-bottom:none;border-radius:3px 3px 0 0;background:linear-gradient(#f0f0f0,#e8e8e8 50%,#dadada 52%,#d6d6d6)"></div>
<svg class="a" style="left:357px;top:748px" width="18" height="17"><circle cx="6.5" cy="6.5" r="5.2" fill="#cfeaf6" stroke="#4a8cae" stroke-width="1.2"/><circle cx="5.5" cy="5" r="2" fill="#f2fbff"/><path d="M10.5 10.5L15 15" stroke="#7a6210" stroke-width="3.6" stroke-linecap="round"/><path d="M10.5 10.5L15 15" stroke="#e0c040" stroke-width="2" stroke-linecap="round"/></svg>
<div class="t" style="left:377px;top:751px;font-size:12px;color:#000">Search results</div>
<svg class="a" style="left:477px;top:752px" width="10" height="10"><path d="M0.5 0.5L9 9M9 0.5L0.5 9" stroke="#6e6e6e" stroke-width="1.15"/></svg>
<div class="a" style="left:490px;top:747px;width:81px;height:20px;border:1px solid #a8a8a8;border-bottom:none;border-radius:3px 3px 0 0;background:linear-gradient(#f0f0f0,#e8e8e8 50%,#dadada 52%,#d6d6d6)"></div>
<svg class="a" style="left:497px;top:749px" width="14" height="16"><path d="M1.5 3.5H9.5L12.5 6.5V15H1.5Z" fill="#f4f6fa" stroke="#9aa4b0"/><path d="M3.5 12.5L9.5 1L11.5 2L5.5 13.5L3.5 14.5Z" fill="#f6a020" stroke="#c86a00" stroke-width="0.8"/><path d="M9.5 1L11.5 2" stroke="#888" stroke-width="1.2"/></svg>
<div class="t" style="left:517px;top:751px;font-size:12px;color:#000">Cccc</div>
<svg class="a" style="left:557px;top:752px" width="10" height="10"><path d="M0.5 0.5L9 9M9 0.5L0.5 9" stroke="#6e6e6e" stroke-width="1.15"/></svg>
<div class="a" style="left:571px;top:746px;width:107px;height:23px;border:1px solid #8f8f8f;border-bottom:none;border-radius:3px 3px 0 0;background:linear-gradient(#ffffff,#fcfcfc 55%,#ececec)"></div>
<svg class="a" style="left:578px;top:749px" width="16" height="16"><g fill="#1a78e0"><circle cx="8" cy="8" r="6"/><path d="M6.5 0.5H9.5L10 3H6Z M6.5 15.5H9.5L10 13H6Z M0.5 6.5V9.5L3 10V6Z M15.5 6.5V9.5L13 10V6Z M2.2 2.2L4.5 0.8L5.5 3.5L3.5 5.5Z M13.8 13.8L11.5 15.2L10.5 12.5L12.5 10.5Z M13.8 2.2L15.2 4.5L12.5 5.5L10.5 3.5Z M2.2 13.8L0.8 11.5L3.5 10.5L5.5 12.5Z"/></g><circle cx="8" cy="8" r="3" fill="#e8f2fc"/><path d="M4 6Q8 2 12 6" stroke="#9cd0ff" stroke-width="1.2" fill="none"/></svg>
<div class="t" style="left:597px;top:751px;font-size:12px;font-weight:bold;color:#000">Build log</div>
<svg class="a" style="left:663px;top:752px" width="10" height="10"><path d="M0.5 0.5L9 9M9 0.5L0.5 9" stroke="#6e6e6e" stroke-width="1.15"/></svg>
<div class="a" style="left:678px;top:747px;width:145px;height:20px;border:1px solid #a8a8a8;border-bottom:none;border-radius:3px 3px 0 0;background:linear-gradient(#f0f0f0,#e8e8e8 50%,#dadada 52%,#d6d6d6)"></div>
<svg class="a" style="left:683px;top:748px" width="16" height="17"><path d="M3 16L6.5 6" stroke="#a06020" stroke-width="1.5"/><path d="M4 6.5L7 1L12 4L15 2.5L13 8L9 10L6 8Z" fill="#e82020" stroke="#a00" stroke-width="0.7"/></svg>
<div class="t" style="left:704px;top:751px;font-size:12px;color:#000">Build messages</div>
<svg class="a" style="left:808px;top:752px" width="10" height="10"><path d="M0.5 0.5L9 9M9 0.5L0.5 9" stroke="#6e6e6e" stroke-width="1.15"/></svg>
<div class="a" style="left:823px;top:747px;width:115px;height:20px;border:1px solid #a8a8a8;border-bottom:none;border-radius:3px 3px 0 0;background:linear-gradient(#f0f0f0,#e8e8e8 50%,#dadada 52%,#d6d6d6)"></div>
<svg class="a" style="left:831px;top:749px" width="14" height="16"><path d="M1.5 3.5H9.5L12.5 6.5V15H1.5Z" fill="#f4f6fa" stroke="#9aa4b0"/><path d="M3.5 12.5L9.5 1L11.5 2L5.5 13.5L3.5 14.5Z" fill="#f6a020" stroke="#c86a00" stroke-width="0.8"/><path d="M9.5 1L11.5 2" stroke="#888" stroke-width="1.2"/></svg>
<div class="t" style="left:850px;top:751px;font-size:12px;color:#000">CppCheck</div>
<svg class="a" style="left:924px;top:752px" width="10" height="10"><path d="M0.5 0.5L9 9M9 0.5L0.5 9" stroke="#6e6e6e" stroke-width="1.15"/></svg>
<div class="a" style="left:938px;top:747px;width:176px;height:20px;border:1px solid #a8a8a8;border-bottom:none;border-radius:3px 3px 0 0;background:linear-gradient(#f0f0f0,#e8e8e8 50%,#dadada 52%,#d6d6d6)"></div>
<svg class="a" style="left:946px;top:749px" width="14" height="16"><path d="M1.5 3.5H9.5L12.5 6.5V15H1.5Z" fill="#f4f6fa" stroke="#9aa4b0"/><path d="M3.5 12.5L9.5 1L11.5 2L5.5 13.5L3.5 14.5Z" fill="#f6a020" stroke="#c86a00" stroke-width="0.8"/><path d="M9.5 1L11.5 2" stroke="#888" stroke-width="1.2"/></svg>
<div class="t" style="left:965px;top:751px;font-size:12px;color:#000">CppCheck messages</div>
<svg class="a" style="left:1100px;top:752px" width="10" height="10"><path d="M0.5 0.5L9 9M9 0.5L0.5 9" stroke="#6e6e6e" stroke-width="1.15"/></svg>
<div class="a" style="left:1114px;top:747px;width:98px;height:20px;border:1px solid #a8a8a8;border-bottom:none;border-radius:3px 3px 0 0;background:linear-gradient(#f0f0f0,#e8e8e8 50%,#dadada 52%,#d6d6d6)"></div>
<svg class="a" style="left:1121px;top:749px" width="14" height="16"><path d="M1.5 3.5H9.5L12.5 6.5V15H1.5Z" fill="#f4f6fa" stroke="#9aa4b0"/><path d="M3.5 12.5L9.5 1L11.5 2L5.5 13.5L3.5 14.5Z" fill="#f6a020" stroke="#c86a00" stroke-width="0.8"/><path d="M9.5 1L11.5 2" stroke="#888" stroke-width="1.2"/></svg>
<div class="t" style="left:1141px;top:751px;font-size:12px;color:#000">Cscope</div>
<svg class="a" style="left:1197px;top:752px" width="10" height="10"><path d="M0.5 0.5L9 9M9 0.5L0.5 9" stroke="#6e6e6e" stroke-width="1.15"/></svg>
<div class="a" style="left:1212px;top:747px;width:114px;height:20px;border:1px solid #a8a8a8;border-bottom:none;border-radius:3px 3px 0 0;background:linear-gradient(#f0f0f0,#e8e8e8 50%,#dadada 52%,#d6d6d6)"></div>
<svg class="a" style="left:1220px;top:749px" width="16" height="16"><g fill="#1a78e0"><circle cx="8" cy="8" r="6"/><path d="M6.5 0.5H9.5L10 3H6Z M6.5 15.5H9.5L10 13H6Z M0.5 6.5V9.5L3 10V6Z M15.5 6.5V9.5L13 10V6Z M2.2 2.2L4.5 0.8L5.5 3.5L3.5 5.5Z M13.8 13.8L11.5 15.2L10.5 12.5L12.5 10.5Z M13.8 2.2L15.2 4.5L12.5 5.5L10.5 3.5Z M2.2 13.8L0.8 11.5L3.5 10.5L5.5 12.5Z"/></g><circle cx="8" cy="8" r="3" fill="#e8f2fc"/><path d="M4 6Q8 2 12 6" stroke="#9cd0ff" stroke-width="1.2" fill="none"/></svg>
<div class="t" style="left:1238px;top:751px;font-size:12px;color:#000">Debugger</div>
<svg class="a" style="left:1311px;top:752px" width="10" height="10"><path d="M0.5 0.5L9 9M9 0.5L0.5 9" stroke="#6e6e6e" stroke-width="1.15"/></svg>
<div class="a" style="left:1326px;top:747px;width:122px;height:20px;border:1px solid #a8a8a8;border-bottom:none;border-radius:3px 3px 0 0;background:linear-gradient(#f0f0f0,#e8e8e8 50%,#dadada 52%,#d6d6d6)"></div>
<svg class="a" style="left:1332px;top:749px" width="14" height="16"><path d="M1.5 3.5H9.5L12.5 6.5V15H1.5Z" fill="#f4f6fa" stroke="#9aa4b0"/><path d="M3.5 12.5L9.5 1L11.5 2L5.5 13.5L3.5 14.5Z" fill="#f6a020" stroke="#c86a00" stroke-width="0.8"/><path d="M9.5 1L11.5 2" stroke="#888" stroke-width="1.2"/></svg>
<div class="t" style="left:1352px;top:751px;font-size:12px;color:#000">DoxyBlocks</div>
<svg class="a" style="left:1434px;top:752px" width="10" height="10"><path d="M0.5 0.5L9 9M9 0.5L0.5 9" stroke="#6e6e6e" stroke-width="1.15"/></svg>
<div class="a" style="left:1448px;top:747px;width:112px;height:20px;border:1px solid #a8a8a8;border-bottom:none;border-radius:3px 3px 0 0;background:linear-gradient(#f0f0f0,#e8e8e8 50%,#dadada 52%,#d6d6d6)"></div>
<svg class="a" style="left:1455px;top:749px" width="14" height="16"><path d="M1.5 3.5H9.5L12.5 6.5V15H1.5Z" fill="#f4f6fa" stroke="#9aa4b0"/><path d="M3.5 12.5L9.5 1L11.5 2L5.5 13.5L3.5 14.5Z" fill="#f6a020" stroke="#c86a00" stroke-width="0.8"/><path d="M9.5 1L11.5 2" stroke="#888" stroke-width="1.2"/></svg>
<div class="t" style="left:1474px;top:751px;font-size:12px;color:#000">Fortran</div>
<div class="logt" style="left:206px;top:780px">Checking for existence: D:\myproject\reducto\bin\Debug\reducto.exe</div>
<div class="logt" style="left:206px;top:794px">Executing: "D:\CodeBlocks/cb_console_runner.exe" "D:\myproject\reducto\bin\Debug\reducto.exe"  (in D:\myproject\reducto\.)</div>
<!--/LOGS-->
<!-- ===== console window ===== -->
<div class="a" style="left:874px;top:145px;width:640px;height:442px;border:1px solid #4f5b5b;border-radius:6px;background:linear-gradient(#dbe9f7 0px,#e6fbfd 14px,#eafdfd 20px,#c9eef5 28px,#d0fbfd 31px,#d0fbfd)"></div>
<div class="a" style="left:883px;top:176px;width:604px;height:401px;background:#000;border-top:1px solid #6f8b8b"></div>
<svg class="a" style="left:884px;top:154px" width="15" height="13"><rect x="0.5" y="0.5" width="14" height="12" fill="#e8ecec" stroke="#a4acac"/><rect x="2" y="2.5" width="5" height="9" fill="#3a8a70"/><rect x="2" y="2.5" width="5" height="3" fill="#4a7ac0"/><rect x="11" y="2.5" width="2.5" height="6" fill="#6aa0d0"/></svg>
<div class="t" style="left:905px;top:154px;font-size:13.55px;color:#000">D:\myproject\reducto\bin\Debug\reducto.exe</div>
<div class="a" style="left:1439px;top:145px;width:60px;height:20px;border:1px solid #7d8a8c;border-top:none;border-radius:0 0 0 5px;background:linear-gradient(#cfe0f4,#e6f8fc)"></div>
<div class="a" style="left:1467px;top:146px;width:1px;height:19px;background:#7d8a8c"></div>
<div class="a" style="left:1448px;top:155px;width:12px;height:5px;border:1.5px solid #3e3e52;border-radius:1px;background:#f4f4f4"></div>
<div class="a" style="left:1475px;top:150px;width:12px;height:10px;border:1.5px solid #3e3e52;border-radius:1px;background:#f4f4f4"><div class="a" style="left:2px;top:2px;width:6px;height:4px;border:1.5px solid #3e3e52;background:#cdf4fc"></div></div>
<div class="con" style="left:884px;top:179px">Usage: D:\myproject\reducto\bin\Debug\reducto.exe filename</div>
<div class="con" style="left:884px;top:211px">Process returned 1 (0x1)   execution time : 0.115 s</div>
<div class="con" style="left:884px;top:227px">Press any key to continue.</div>

</body></html>
